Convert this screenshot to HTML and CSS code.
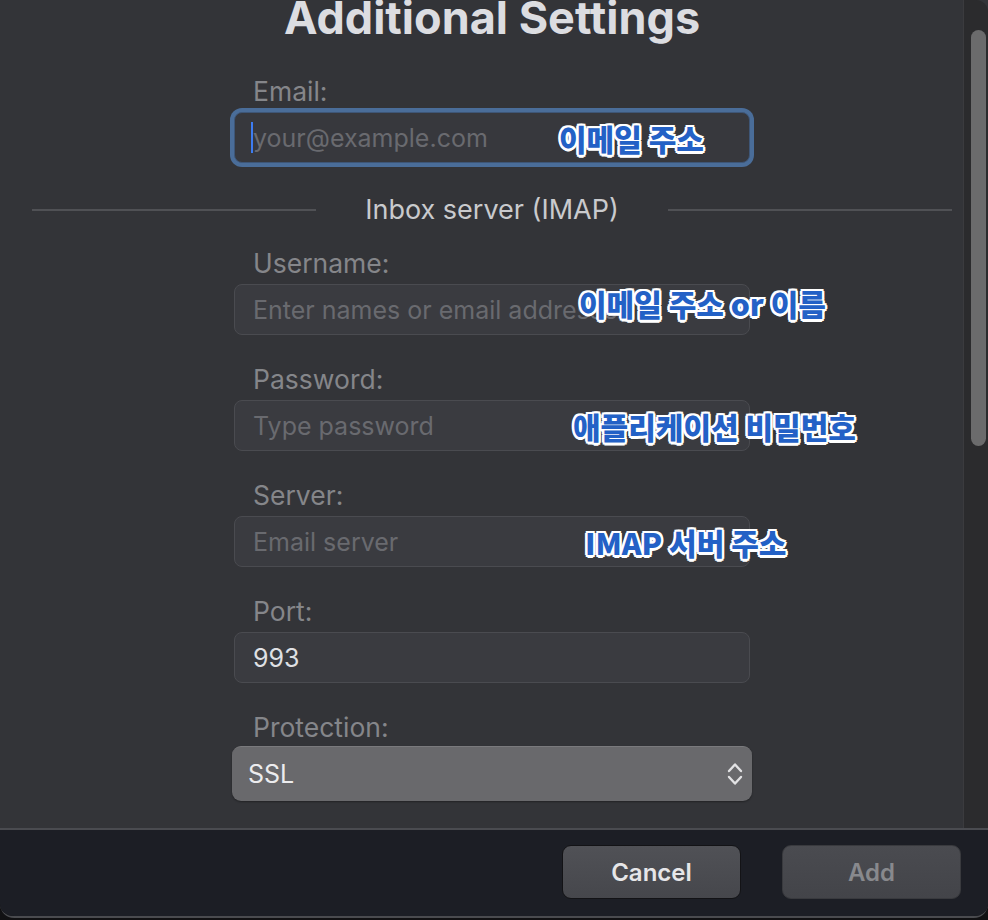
FILE: index.html
```html
<!DOCTYPE html>
<html lang="en">
<head>
    <meta charset="UTF-8">
    <meta name="viewport" content="width=device-width, initial-scale=1.0">
    <title>Additional Settings</title>
    <link rel="stylesheet" href="styles.css">
</head>
<body>
    <div class="window">
        <div class="scroll-area">
            <div class="content">
                <h1 class="title">Additional Settings</h1>

                <div class="field">
                    <label class="label">Email:</label>
                    <div class="input-wrap input-focus">
                        <span class="caret"></span>
                        <input class="input" type="text" placeholder="your@example.com">
                        <span class="note note-email">이메일 주소</span>
                    </div>
                </div>

                <div class="separator">
                    <span class="separator-line"></span>
                    <span class="separator-text">Inbox server (IMAP)</span>
                    <span class="separator-line"></span>
                </div>

                <div class="field">
                    <label class="label">Username:</label>
                    <div class="input-wrap">
                        <input class="input" type="text" placeholder="Enter names or email addresses">
                        <span class="note note-user">이메일 주소 or 이름</span>
                    </div>
                </div>

                <div class="field">
                    <label class="label">Password:</label>
                    <div class="input-wrap">
                        <input class="input" type="password" placeholder="Type password">
                        <span class="note note-pass">애플리케이션 비밀번호</span>
                    </div>
                </div>

                <div class="field">
                    <label class="label">Server:</label>
                    <div class="input-wrap">
                        <input class="input" type="text" placeholder="Email server">
                        <span class="note note-server">IMAP 서버 주소</span>
                    </div>
                </div>

                <div class="field">
                    <label class="label">Port:</label>
                    <div class="input-wrap">
                        <input class="input" type="text" value="993">
                    </div>
                </div>

                <div class="field field-select">
                    <label class="label label-select">Protection:</label>
                    <div class="select">
                        <span>SSL</span>
                        <svg class="chevrons" width="16" height="24" viewBox="0 0 16 24">
                            <path d="M2 9 L8 2.5 L14 9" fill="none" stroke="#e2e2e4" stroke-width="2.4" stroke-linecap="round" stroke-linejoin="round"/>
                            <path d="M2 15 L8 21.5 L14 15" fill="none" stroke="#e2e2e4" stroke-width="2.4" stroke-linecap="round" stroke-linejoin="round"/>
                        </svg>
                    </div>
                </div>
            </div>

            <div class="scrollbar">
                <div class="scrollbar-thumb"></div>
            </div>
        </div>

        <div class="footer">
            <button class="button-cancel">Cancel</button>
            <button class="button-add" disabled>Add</button>
        </div>
    </div>
</body>
</html>
```

FILE: styles.css
```css
body {
    margin: 0;
    background-color: #111113;
    font-family: Inter, "Noto Sans", Arial, sans-serif;
}

.window {
    width: 988px;
    height: 916px;
    display: flex;
    flex-direction: column;
    border-bottom: 2px solid #4a4b4f;
    border-radius: 0 0 14px 14px;
    overflow: hidden;
}

.scroll-area {
    position: relative;
    height: 828px;
    overflow: hidden;
    background-color: #333438;
}
.content {
    padding: 0 36px 0 32px;
}

.title {
    margin: -6px 0 0;
    color: #dcdde1;
    font-size: 45px;
    line-height: 48px;
    font-weight: 700;
    text-align: center;
}

.field {
    width: 516px;
    margin: 0 auto 29px;
}
.field:first-of-type {
    margin-top: 34px;
    margin-bottom: 0;
}
.label {
    display: block;
    color: #85868a;
    font-size: 26.5px;
    line-height: 30px;
    padding-left: 19px;
    margin-bottom: 6px;
}
.label-select {
    margin-bottom: 4px;
}

.input-wrap {
    position: relative;
}
.input {
    display: block;
    width: 100%;
    height: 51px;
    box-sizing: border-box;
    padding: 0 18px;
    background-color: #3a3b40;
    border: 1px solid #4a4b50;
    border-radius: 8px;
    color: #dfe0e4;
    font-family: Inter, Arial, sans-serif;
    font-size: 25px;
    outline: none;
}
.input::placeholder {
    color: #696a6f;
}
.input-focus .input {
    background-color: #37383d;
    border-color: #3e5677;
    box-shadow: 0 0 0 4px #4a6d99;
}
.caret {
    position: absolute;
    left: 17px;
    top: 10px;
    width: 2px;
    height: 31px;
    background-color: #3d7cf2;
}

.note {
    position: absolute;
    top: 50%;
    transform: translateY(-50%);
    white-space: nowrap;
    color: #2361c6;
    font-family: "Noto Sans CJK KR", Inter, sans-serif;
    font-weight: 900;
    font-size: 30px;
    line-height: 36px;
    text-shadow:
        -2.5px 0 #fff, 2.5px 0 #fff, 0 -2.5px #fff, 0 2.5px #fff,
        -1.8px -1.8px #fff, 1.8px 1.8px #fff, -1.8px 1.8px #fff, 1.8px -1.8px #fff;
}
.note-email { left: 325px; }
.note-user { left: 345px; margin-top: -7px; }
.note-pass { left: 339px; }
.note-server { left: 351px; }

.separator {
    display: flex;
    align-items: center;
    height: 30px;
    margin: 32px 0 23px;
}
.separator-line {
    flex: 1;
    height: 2px;
    background-color: #505155;
}
.separator-text {
    padding: 0 49px;
    color: #c9cacd;
    font-size: 27px;
    line-height: 30px;
}

.field-select {
    margin-bottom: 0;
}
.select {
    display: flex;
    align-items: center;
    justify-content: space-between;
    height: 55px;
    margin: 0 -2px 0 -2px;
    padding: 0 9px 0 16px;
    box-sizing: border-box;
    background-color: #69696c;
    border-top: 1px solid #7a7a7d;
    border-radius: 9px;
    box-shadow: 0 1px 2px rgba(0, 0, 0, 0.35);
    color: #ececee;
    font-size: 25px;
}

.scrollbar {
    position: absolute;
    top: 0;
    right: 0;
    bottom: 0;
    width: 24px;
    background-color: #2b2b2d;
    border-left: 1px solid #3b3b3e;
    border-top-right-radius: 12px;
}
.scrollbar-thumb {
    width: 15px;
    height: 416px;
    margin: 30px 0 0 7px;
    background-color: #6b6b6c;
    border-radius: 8px;
}

.footer {
    flex: 1;
    display: flex;
    align-items: center;
    justify-content: flex-end;
    gap: 41px;
    padding-right: 27px;
    background-color: #1c1e25;
    border-top: 2px solid #4a4b50;
}
.button-cancel,
.button-add {
    width: 179px;
    height: 54px;
    margin-top: -2px;
    border-radius: 9px;
    font-family: Inter, Arial, sans-serif;
    font-size: 24px;
    font-weight: 600;
}
.button-cancel {
    background: linear-gradient(#505156, #46474c);
    border: 1px solid #131316;
    color: #e6e6e8;
}
.button-add {
    background: linear-gradient(#4a4b50, #434449);
    border: 1px solid #393a3e;
    color: #88898d;
}
```
